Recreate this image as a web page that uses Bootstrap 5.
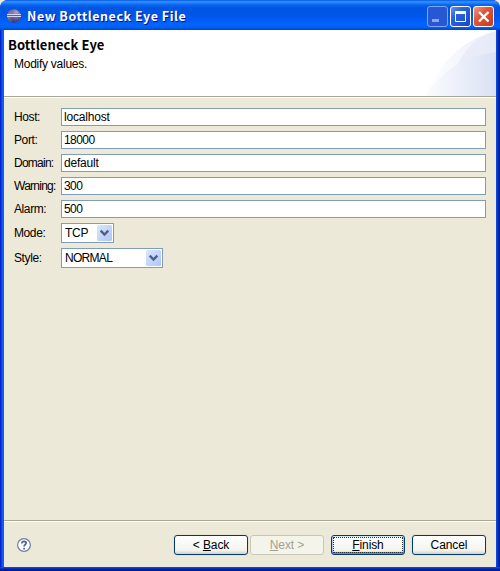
<!DOCTYPE html>
<html lang="en">
<head>
<meta charset="utf-8">
<meta name="viewport" content="width=device-width, initial-scale=1">
<title>New Bottleneck Eye File</title>
<link href="https://cdn.jsdelivr.net/npm/bootstrap@5.3.0/dist/css/bootstrap.min.css" rel="stylesheet">
<style>
body{width:500px;height:571px;overflow:hidden;background:#ece9d8;font:12px/16px "Liberation Sans",Arial,sans-serif;color:#000}
.window{width:500px;height:571px;border-radius:8px 8px 0 0;background:#0831d9}
.titlebar{height:30px;padding:0 6px 0 7px;background:linear-gradient(#0058e6 0,#3a93ff 6%,#2484fb 9%,#0866ee 16%,#0055e5 26%,#0055e5 48%,#005cf5 66%,#0066ff 84%,#005ef0 92%,#0043cf 100%)}
.orb{margin-top:9px}
.title-text{font:bold 12.5px/16px "Noto Sans CJK JP","Noto Sans",sans-serif;color:#fff;text-shadow:1px 1px 0 #0f1089;letter-spacing:.54px;margin:5px 0 0 6px;padding-top:3px}
.controls{margin-top:6px}
.frame{padding:0 4px 4px;background:linear-gradient(90deg,#0019cf 0,#0831d9 1px,#166aee 3px,#0855dd 4px,#0855dd 496px,#0441d8 497px,#001ea0 499px,#00138c 500px)}
.frame-foot{height:4px;margin:0 -4px -4px;background:linear-gradient(#0855dd,#0441d8 25%,#001ea0 60%,#00138c)}
.header{height:66px;background:#fff;padding:6px 0 0 4px}
.heading{font:bold 13px/17px "Noto Sans CJK JP","Noto Sans",sans-serif;letter-spacing:.09px}
.sub{margin:3px 0 0 6px;letter-spacing:-.26px}
.swoosh{right:0;top:0}
.rule{height:2px;background:linear-gradient(#aca899 50%,#fff 50%)}
.panel{background:#ece9d8}
.fields{padding:10px 10px 0 10px}
.field-row{height:18px;margin-bottom:5px}
.combo-row{height:20px;margin-bottom:5px}
.caption{flex:0 0 47px;white-space:nowrap;letter-spacing:-.4px;line-height:19px}
.caption-wide{letter-spacing:-.75px}
.edit{height:18px;border:1px solid #7f9db9;border-radius:0;padding:0 2px;font-size:12px;line-height:16px;color:#000;background:#fff;min-height:0;letter-spacing:-.2px}
.edit-num{letter-spacing:-.55px}
.edit:focus{box-shadow:none;border-color:#7f9db9;color:#000}
.combo{height:20px;border:1px solid #7f9db9;background:#fff;padding:1px 1px 1px 3px;line-height:16px;letter-spacing:-.7px}
.combo-sm{width:53px;letter-spacing:-.3px}
.combo-lg{width:102px}
.actions{height:45px;padding:13px 10px 0 13px}
.help{margin-top:3px}
.xp-btn{width:74px;height:20px;padding:0;border:1px solid #003c74;border-radius:3px;background:linear-gradient(#fff,#f3f3ee 80%,#d6d0c5);font-size:12px;line-height:18px;color:#000;box-shadow:0 0 0 1px #e5e2d2;letter-spacing:-.1px}
.xp-btn:disabled{border-color:#c9c7ba;background:#f5f4ea;color:#a1a192;opacity:1;box-shadow:none}
.next{margin-left:2px}
.apart{margin-left:7px}
.xp-default{box-shadow:inset 0 1px #cee7ff,inset 0 -2px #6982ee,inset 1px 0 #b0c7f3,inset -1px 0 #a3bbf0;outline:1px dotted #333;outline-offset:-3px}
svg{display:block}
</style>
</head>
<body>
<div class="window d-flex flex-column overflow-hidden">
  <div class="titlebar d-flex align-items-start flex-shrink-0">
    <svg class="orb" width="14" height="14" viewBox="0 0 14 14">
      <defs><radialGradient id="orb" cx=".65" cy=".25" r=".8"><stop offset="0" stop-color="#a9a3cf"/><stop offset=".5" stop-color="#6b609c"/><stop offset="1" stop-color="#352b69"/></radialGradient>
      <linearGradient id="orbL"><stop offset="0" stop-color="#e2a58f"/><stop offset=".4" stop-color="#e2a58f" stop-opacity="0"/></linearGradient></defs>
      <circle cx="7" cy="7" r="6.800" fill="url(#orb)"/><circle cx="7" cy="7" r="6.800" fill="url(#orbL)" opacity=".6"/>
      <path d="M0 5.500h14M0 7.500h14" stroke="#d5d5f2"/><path d="M1 6.500h12" stroke="#625b9b"/>
    </svg>
    <div class="title-text">New Bottleneck Eye File</div>
    <svg class="controls ms-auto" width="67" height="21" viewBox="0 0 67 21">
      <defs>
        <linearGradient id="blue" x2="1" y2="1"><stop offset="0" stop-color="#6d96f5"/><stop offset=".35" stop-color="#2b62e2"/><stop offset="1" stop-color="#1746c4"/></linearGradient>
        <linearGradient id="red" x2="1" y2="1"><stop offset="0" stop-color="#f0a085"/><stop offset=".4" stop-color="#e0563a"/><stop offset="1" stop-color="#c33a16"/></linearGradient>
      </defs>
      <rect x=".5" y=".5" width="20" height="20" rx="2.500" fill="#2857d4" stroke="#7fa5f3"/>
      <rect x="5" y="13" width="7" height="3" fill="#93a5ea"/>
      <rect x="23.500" y=".5" width="20" height="20" rx="2.500" fill="url(#blue)" stroke="#fff"/>
      <path d="M28.500 6.500h10v9h-10z" fill="none" stroke="#fff"/><path d="M28 6.500h11" stroke="#fff" stroke-width="3"/>
      <rect x="46.500" y=".5" width="20" height="20" rx="2.500" fill="url(#red)" stroke="#fff"/>
      <path d="M52 6l9.500 9.500M61.500 6L52 15.500" stroke="#fff" stroke-width="2.300"/>
    </svg>
  </div>
  <div class="frame flex-grow-1 d-flex flex-column">
    <div class="header position-relative flex-shrink-0">
      <svg class="swoosh position-absolute" width="75" height="66" viewBox="0 0 75 66">
        <defs><linearGradient id="sw"><stop offset="0" stop-color="#fbfcfe"/><stop offset="1" stop-color="#dae1f5"/></linearGradient>
        <linearGradient id="sw2"><stop offset="0" stop-color="#fff"/><stop offset="1" stop-color="#e9edf8"/></linearGradient></defs>
        <path d="M4 66Q28 12 75 1V66z" fill="url(#sw2)"/>
        <path d="M36 36Q48 9 75 1V22Q54 25 36 36z" fill="#e5eaf7" opacity=".75"/>
        <path d="M4 66Q30 27 75 22V66z" fill="url(#sw)"/>
      </svg>
      <div class="heading">Bottleneck Eye</div>
      <div class="sub">Modify values.</div>
    </div>
    <div class="rule flex-shrink-0"></div>
    <form class="panel flex-grow-1 d-flex flex-column" onsubmit="return false">
      <div class="fields flex-grow-1">
        <div class="field-row d-flex"><label class="caption" for="host">Host:</label><input id="host" class="edit form-control" value="localhost"></div>
        <div class="field-row d-flex"><label class="caption" for="port">Port:</label><input id="port" class="edit edit-num form-control" value="18000"></div>
        <div class="field-row d-flex"><label class="caption caption-wide" for="domain">Domain:</label><input id="domain" class="edit form-control" value="default"></div>
        <div class="field-row d-flex"><label class="caption caption-wide" for="warning">Warning:</label><input id="warning" class="edit edit-num form-control" value="300"></div>
        <div class="field-row d-flex"><label class="caption" for="alarm">Alarm:</label><input id="alarm" class="edit edit-num form-control" value="500"></div>
        <div class="combo-row d-flex align-items-center"><span class="caption">Mode:</span>
          <div class="combo combo-sm d-flex justify-content-between"><span>TCP</span>
            <svg width="15" height="16" viewBox="0 0 15 16"><defs><linearGradient id="arrow" x2="1" y2="1"><stop offset="0" stop-color="#dce6fe"/><stop offset="1" stop-color="#aec5f6"/></linearGradient></defs><rect width="15" height="16" rx="1.500" fill="url(#arrow)"/><path d="M3.700 5.700L7.500 9.500l3.800-3.800" fill="none" stroke="#4d6185" stroke-width="2.400"/></svg>
          </div></div>
        <div class="combo-row d-flex align-items-center"><span class="caption">Style:</span>
          <div class="combo combo-lg d-flex justify-content-between"><span>NORMAL</span>
            <svg width="15" height="16" viewBox="0 0 15 16"><rect width="15" height="16" rx="1.500" fill="url(#arrow)"/><path d="M3.700 5.700L7.500 9.500l3.800-3.800" fill="none" stroke="#4d6185" stroke-width="2.400"/></svg>
          </div></div>
      </div>
      <div class="rule"></div>
      <div class="actions d-flex align-items-start">
        <svg class="help" width="15" height="15" viewBox="0 0 15 15"><circle cx="7" cy="7" r="6.400" fill="#fff" stroke="#6c7fa6" stroke-width="1.200"/><path d="M4.800 5.500V5Q5 3.300 7 3.300 9.200 3.400 9.200 5.100C9.200 6.500 7.100 6.500 7.100 8.500M7.100 9.700v1.800" fill="none" stroke="#506594" stroke-width="1.700"/></svg>
        <button class="btn xp-btn ms-auto" type="button">&lt; <u>B</u>ack</button>
        <button class="btn xp-btn next" type="button" disabled><u>N</u>ext &gt;</button>
        <button class="btn xp-btn xp-default apart" type="submit"><u>F</u>inish</button>
        <button class="btn xp-btn apart" type="button">Cancel</button>
      </div>
    </form>
    <div class="frame-foot flex-shrink-0"></div>
  </div>
</div>
<script src="https://cdn.jsdelivr.net/npm/bootstrap@5.3.0/dist/js/bootstrap.bundle.min.js"></script>
</body>
</html>
